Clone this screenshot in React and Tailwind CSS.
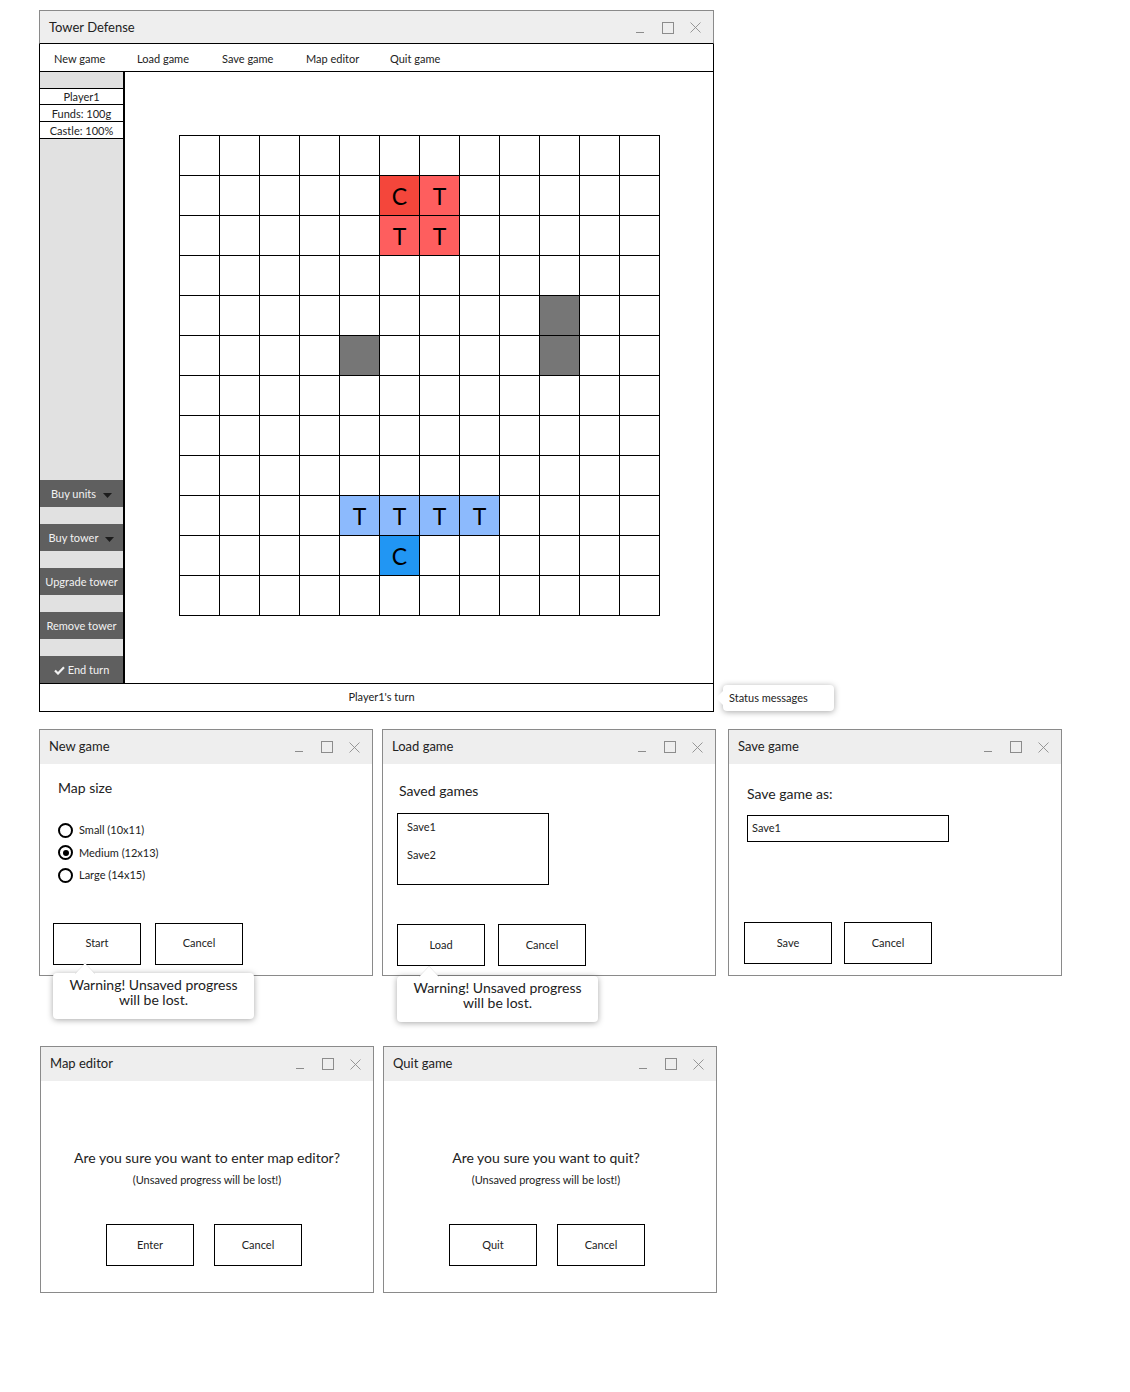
import React from "react";

const FONT = { fontFamily: "Lato, 'Liberation Sans', sans-serif" };

const TILES = {
  "1-5": { bg: "bg-[#f4463b]", label: "C" },
  "1-6": { bg: "bg-[#fe5e5e]", label: "T" },
  "2-5": { bg: "bg-[#fe5e5e]", label: "T" },
  "2-6": { bg: "bg-[#fe5e5e]", label: "T" },
  "4-9": { bg: "bg-[#767676]", label: "" },
  "5-9": { bg: "bg-[#767676]", label: "" },
  "5-4": { bg: "bg-[#767676]", label: "" },
  "9-4": { bg: "bg-[#8cbafd]", label: "T" },
  "9-5": { bg: "bg-[#8cbafd]", label: "T" },
  "9-6": { bg: "bg-[#8cbafd]", label: "T" },
  "9-7": { bg: "bg-[#8cbafd]", label: "T" },
  "10-5": { bg: "bg-[#2196f3]", label: "C" },
};

function Controls() {
  return (
    <div className="ml-auto flex items-center pr-[12px] text-[#8c8c8c]">
      <svg width="10" height="12" viewBox="0 0 10 12" className="mr-[17px]">
        <path d="M1 10.5h8" stroke="currentColor" strokeWidth="1" />
      </svg>
      <svg width="12" height="12" viewBox="0 0 12 12" className="mr-[16px]">
        <rect x="0.5" y="0.5" width="11" height="11" fill="none" stroke="currentColor" />
      </svg>
      <svg width="11" height="11" viewBox="0 0 11 11">
        <path d="M0.5 0.5l10 10M10.5 0.5l-10 10" stroke="currentColor" strokeWidth="0.9" />
      </svg>
    </div>
  );
}

function Dialog({ title, children, className = "" }) {
  return (
    <div className={`relative flex h-[247px] w-[334px] shrink-0 flex-col border border-[#8a8a8a] bg-white ${className}`}>
      <div className="flex h-[34px] shrink-0 items-center bg-[#eeeeee] pl-[9px] text-[13px] text-[#222]">
        {title}
        <Controls />
      </div>
      <div className="flex flex-1 flex-col">{children}</div>
    </div>
  );
}

function Btn({ children }) {
  return (
    <div className="flex h-[42px] w-[88px] items-center justify-center border border-black bg-white text-[11px] text-[#222]">
      {children}
    </div>
  );
}

function Warning({ className }) {
  return (
    <div className={`absolute z-10 h-[46px] w-[201px] ${className}`}>
      <div className="flex h-full w-full flex-col items-center justify-center rounded-[4px] bg-white pb-[8px] text-[14px] leading-[15px] text-[#222] shadow-[0_1px_6px_rgba(0,0,0,0.35)]">
        <span>Warning! Unsaved progress</span>
        <span>will be lost.</span>
      </div>
      <svg width="20" height="12" viewBox="0 0 20 12" className="absolute left-[22px] top-[-11px]">
        <path d="M0 12L10 1L20 12Z" fill="white" />
        <path d="M0 12L10 1L20 12" fill="none" stroke="rgba(0,0,0,0.08)" />
      </svg>
    </div>
  );
}

function Radio({ checked, label }) {
  return (
    <div className="flex h-[22.5px] items-center">
      <span className="flex h-[15px] w-[15px] items-center justify-center rounded-full border-2 border-black">
        {checked && <span className="h-[6px] w-[6px] rounded-full bg-black" />}
      </span>
      <span className="ml-[6px] text-[11px] text-[#222]">{label}</span>
    </div>
  );
}

function SideBtn({ children }) {
  return (
    <div className="flex h-[27px] items-center justify-center bg-[#5f5f5f] pt-[1px] text-[11px] text-[#f2f2f2]">
      {children}
    </div>
  );
}

function Caret() {
  return (
    <svg width="9" height="5" viewBox="0 0 9 5" className="ml-[7px] mt-[2px]">
      <path d="M0 0h9L4.5 5z" fill="#1c1c1c" />
    </svg>
  );
}

function MainWindow() {
  const menu = ["New game", "Load game", "Save game", "Map editor", "Quit game"];
  return (
    <div className="flex w-[675px] shrink-0 flex-col">
      <div className="flex h-[34px] items-center border-x border-t border-b border-[#8a8a8a] border-b-black bg-[#eeeeee] pl-[9px] pt-[1px] text-[13px] text-[#222]">
        Tower Defense
        <Controls />
      </div>
      <div className="flex flex-col border-x border-b border-black">
        <div className="flex h-[28px] items-center border-b border-black pl-[14px] pt-[3px] text-[11px] text-[#222]">
          {menu.map((m, i) => (
            <span key={m} className={i === 0 ? "w-[83px]" : i === 1 ? "w-[85px]" : "w-[84px]"}>
              {m}
            </span>
          ))}
        </div>
        <div className="flex h-[611px]">
          <div className="flex w-[85px] flex-col border-r-2 border-black bg-[#e1e1e1] text-[11px] text-[#222]">
            <div className="h-[16px]" />
            <div className="flex h-[17px] items-center justify-center border-y border-black bg-white pt-[2px]">Player1</div>
            <div className="flex h-[17px] items-center justify-center border-b border-black bg-white pt-[2px]">Funds: 100g</div>
            <div className="flex h-[17px] items-center justify-center border-b border-black bg-white pt-[2px]">Castle: 100%</div>
            <div className="flex-1" />
            <SideBtn>
              Buy units
              <Caret />
            </SideBtn>
            <div className="h-[17px]" />
            <SideBtn>
              Buy tower
              <Caret />
            </SideBtn>
            <div className="h-[17px]" />
            <SideBtn>Upgrade tower</SideBtn>
            <div className="h-[17px]" />
            <SideBtn>Remove tower</SideBtn>
            <div className="h-[17px]" />
            <SideBtn>
              <svg width="11" height="9" viewBox="0 0 11 9" className="mr-[3px]">
                <path d="M1 4.5l3 3L10 1.2" fill="none" stroke="#f2f2f2" strokeWidth="2.2" />
              </svg>
              End turn
            </SideBtn>
          </div>
          <div className="flex-1 pl-[54px] pt-[63px]">
            <div className="grid w-max grid-cols-[repeat(12,40px)] border-l border-t border-black">
              {Array.from({ length: 144 }).map((_, idx) => {
                const r = Math.floor(idx / 12);
                const c = idx % 12;
                const t = TILES[`${r}-${c}`];
                return (
                  <div
                    key={idx}
                    className={`flex h-[40px] w-[40px] items-center justify-center border-b border-r border-black pt-[2px] text-[23px] text-black ${t ? t.bg : "bg-white"}`}
                  >
                    {t ? t.label : ""}
                  </div>
                );
              })}
            </div>
          </div>
        </div>
        <div className="flex h-[28px] items-center justify-center border-t border-black pl-[10px] text-[11px] text-[#222]">
          Player1's turn
        </div>
      </div>
    </div>
  );
}

export default function App() {
  return (
    <div className="relative h-[1392px] w-[1130px] bg-white" style={FONT}>
      <div className="flex items-end pl-[39px] pt-[10px]">
        <MainWindow />
        <div className="relative mb-[1px] ml-[9px] flex h-[26px] w-[111px] items-center rounded-[4px] bg-white pl-[6px] text-[11px] text-[#222] shadow-[0_1px_6px_rgba(0,0,0,0.35)]">
          Status messages
          <svg width="10" height="18" viewBox="0 0 10 18" className="absolute left-[-8px] top-[4px]">
            <path d="M10 0L1 9L10 18Z" fill="white" />
          </svg>
        </div>
      </div>

      <div className="mt-[17px] flex pl-[39px]">
        <Dialog title="New game">
          <div className="ml-[18px] mt-[14px] text-[14px] leading-[20px] text-[#222]">Map size</div>
          <div className="ml-[18px] mt-[21px] flex flex-col">
            <Radio label="Small (10x11)" />
            <Radio checked label="Medium (12x13)" />
            <Radio label="Large (14x15)" />
          </div>
          <div className="ml-[13px] mt-[36px] flex gap-[14px]">
            <Btn>Start</Btn>
            <Btn>Cancel</Btn>
          </div>
          <Warning className="left-[13px] top-[243px]" />
        </Dialog>

        <Dialog title="Load game" className="ml-[9px]">
          <div className="ml-[16px] mt-[17px] text-[14px] leading-[20px] text-[#222]">Saved games</div>
          <div className="ml-[14px] mt-[12px] flex h-[72px] w-[152px] flex-col border border-black pl-[9px] pt-[5px] text-[11px] leading-[16px] text-[#222]">
            <span>Save1</span>
            <span className="mt-[12px]">Save2</span>
          </div>
          <div className="ml-[14px] mt-[39px] flex gap-[13px]">
            <Btn>Load</Btn>
            <Btn>Cancel</Btn>
          </div>
          <Warning className="left-[14px] top-[246px]" />
        </Dialog>

        <Dialog title="Save game" className="ml-[12px]">
          <div className="ml-[18px] mt-[20px] text-[14px] leading-[20px] text-[#222]">Save game as:</div>
          <div className="ml-[18px] mt-[11px] flex h-[27px] w-[202px] items-center border border-black pl-[4px] text-[11px] text-[#222]">
            Save1
          </div>
          <div className="ml-[15px] mt-[80px] flex gap-[12px]">
            <Btn>Save</Btn>
            <Btn>Cancel</Btn>
          </div>
        </Dialog>
      </div>

      <div className="mt-[70px] flex pl-[40px]">
        <Dialog title="Map editor">
          <div className="mt-[67px] text-center text-[14px] leading-[20px] text-[#222]">
            Are you sure you want to enter map editor?
          </div>
          <div className="mt-[4px] text-center text-[11px] leading-[16px] text-[#222]">
            (Unsaved progress will be lost!)
          </div>
          <div className="mt-[36px] flex justify-center gap-[20px] pr-[6px]">
            <Btn>Enter</Btn>
            <Btn>Cancel</Btn>
          </div>
        </Dialog>
        <Dialog title="Quit game" className="ml-[9px]">
          <div className="mt-[67px] pr-[8px] text-center text-[14px] leading-[20px] text-[#222]">
            Are you sure you want to quit?
          </div>
          <div className="mt-[4px] pr-[8px] text-center text-[11px] leading-[16px] text-[#222]">
            (Unsaved progress will be lost!)
          </div>
          <div className="mt-[36px] flex justify-center gap-[20px] pr-[6px]">
            <Btn>Quit</Btn>
            <Btn>Cancel</Btn>
          </div>
        </Dialog>
      </div>
    </div>
  );
}
